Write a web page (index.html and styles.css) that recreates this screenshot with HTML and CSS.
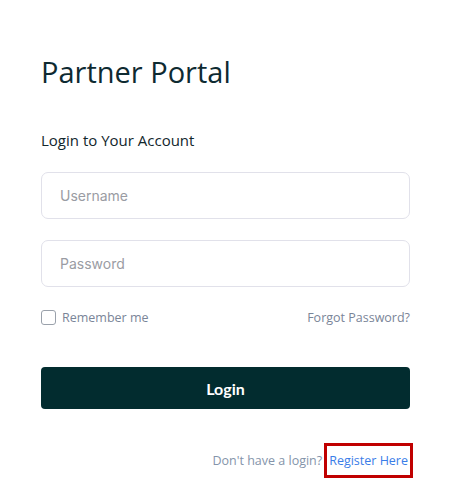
FILE: index.html
```html
<!DOCTYPE html>
<html>
<head>
<meta charset="utf-8">
<link rel="stylesheet" href="styles.css">
</head>
<body>
<main class="card">
  <h1 class="title">Partner Portal</h1>
  <h2 class="subtitle">Login to Your Account</h2>
  <form class="form">
    <input class="field" type="text" placeholder="Username">
    <input class="field" type="password" placeholder="Password">
    <div class="options">
      <label class="remember"><span class="box"></span>Remember me</label>
      <a class="forgot" href="#">Forgot Password?</a>
    </div>
    <button class="login" type="button">Login</button>
  </form>
  <p class="register">Don't have a login?<a class="register-link" href="#">Register Here</a></p>
</main>
</body>
</html>
```

FILE: styles.css
```css
* { box-sizing: border-box; }
html, body { margin: 0; padding: 0; background: #fff; }
body { font-family: "Open Sans", "Noto Sans", sans-serif; }
.card { width: 369px; margin-left: 41px; padding-top: 52px; display: flex; flex-direction: column; }
.title { margin: 0; font-weight: 400; font-size: 29px; line-height: 40px; color: #0e2a31; letter-spacing: 0; }
.subtitle { margin: 38px 0 0; font-weight: 400; font-size: 15px; line-height: 20px; color: #12262c; }
.form { display: flex; flex-direction: column; margin-top: 22px; }
.field { height: 47px; border: 1px solid #e1e1ea; border-radius: 7px; padding: 0 18px; font: 14px "Inter", "Roboto", sans-serif; color: #333; outline: none; }
.field + .field { margin-top: 21px; }
.field::placeholder { color: #9a9ca3; }
.options { display: flex; justify-content: space-between; align-items: center; margin-top: 21px; height: 18px; font-size: 12.5px; color: #7a8598; }
.remember { display: flex; align-items: center; gap: 6px; }
.box { width: 15px; height: 15px; border: 1px solid #9aa1ab; border-radius: 3px; display: inline-block; }
.forgot { color: #7a8598; text-decoration: none; }
.login { margin-top: 41px; height: 42px; border: 0; border-radius: 4px; background: #022c2f; color: #fff; font: 700 16px "Lato", sans-serif; }
.register { margin: 34px -3px 0 0; align-self: flex-end; font-size: 12.5px; color: #8494aa; display: flex; align-items: center; }
.register-link { color: #3a7de8; text-decoration: none; margin-left: 2px; border: 3px solid #c00000; padding: 6px 2px; }
```
